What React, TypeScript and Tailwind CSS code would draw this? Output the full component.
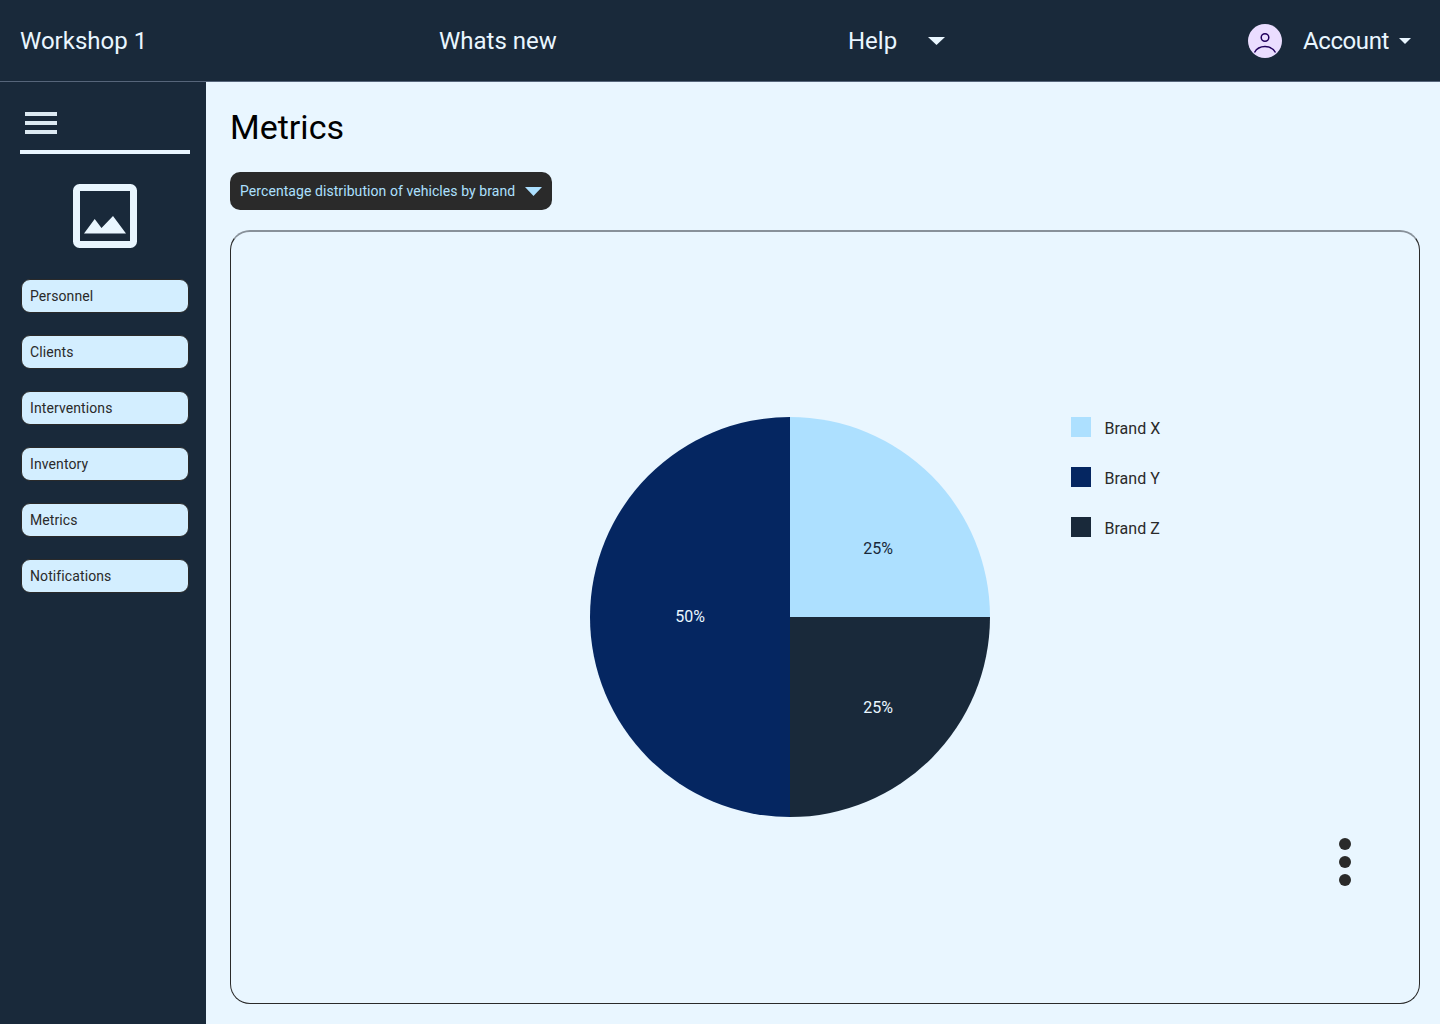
import React from 'react';

const navItems = ['Personnel', 'Clients', 'Interventions', 'Inventory', 'Metrics', 'Notifications'];

const legend = [
  { label: 'Brand X', swatch: 'bg-[#ade0ff]' },
  { label: 'Brand Y', swatch: 'bg-[#052661]' },
  { label: 'Brand Z', swatch: 'bg-[#19293a]' },
];

function Caret({ className }: { className: string }) {
  return (
    <svg className={className} viewBox="0 0 16 8" preserveAspectRatio="none">
      <path d="M0 0h16L8 8z" fill="currentColor" />
    </svg>
  );
}

function PieChart() {
  return (
    <svg width="400" height="400" viewBox="0 0 400 400" className="shrink-0">
      <path d="M200 200V0A200 200 0 0 1 400 200Z" fill="#ade0ff" />
      <path d="M200 200H400A200 200 0 0 1 200 400Z" fill="#19293a" />
      <path d="M200 200V400A200 200 0 0 1 200 0Z" fill="#052661" />
      <text x="288" y="137" textAnchor="middle" fontSize="16" fill="#19293a">25%</text>
      <text x="100" y="205" textAnchor="middle" fontSize="16" fill="#e9f6ff">50%</text>
      <text x="288" y="296" textAnchor="middle" fontSize="16" fill="#e9f6ff">25%</text>
    </svg>
  );
}

export default function App() {
  return (
    <div className="flex h-[1024px] w-[1440px] flex-col overflow-hidden bg-[#e9f6ff] font-['Roboto',sans-serif]">
      {/* Top bar */}
      <header className="flex h-[82px] shrink-0 items-center border-b border-[#56657a] bg-[#19293a] text-2xl text-[#e9f6ff]">
        <div className="w-[439px] pl-[20px]">Workshop 1</div>
        <div className="w-[409px]">Whats new</div>
        <div className="flex w-[400px] items-center">
          <span>Help</span>
          <Caret className="ml-[31px] h-[8px] w-[17px]" />
        </div>
        <div className="flex items-center">
          <div className="flex h-[34px] w-[34px] items-center justify-center rounded-full bg-[#eaddff]">
            <svg width="24" height="24" viewBox="0 0 24 24" fill="none" stroke="#21005d" strokeWidth="1.5">
              <circle cx="12" cy="8.5" r="3.8" />
              <path d="M1.500 23.500C3.500 19.800 7.500 17.600 12 17.600s8.500 2.200 10.500 5.900" />
            </svg>
          </div>
          <span className="ml-[21px] tracking-[-0.4px]">Account</span>
          <Caret className="ml-[10px] h-[6px] w-[12px]" />
        </div>
      </header>

      <div className="flex min-h-0 flex-1">
        {/* Sidebar */}
        <aside className="flex w-[206px] shrink-0 flex-col items-center bg-[#19293a] pl-[20px] pr-[16px]">
          <div className="w-full border-b-[4px] border-[#e9f6ff] pb-[16px] pl-[5px] pt-[30px]">
            <div className="flex w-[32px] flex-col gap-[5px]">
              <div className="h-[4px] bg-[#dce9f2]" />
              <div className="h-[4px] bg-[#dce9f2]" />
              <div className="h-[4px] bg-[#dce9f2]" />
            </div>
          </div>
          <svg className="mt-[30px] shrink-0" width="64" height="64" viewBox="0 0 64 64">
            <rect x="3.500" y="3.500" width="57" height="57" rx="3" fill="none" stroke="#e9f6ff" strokeWidth="7" />
            <path d="M11 49.500 21.700 35 28.500 44 40 32 53 49.500Z" fill="#e9f6ff" />
          </svg>
          <nav className="mt-[31px] flex w-[168px] flex-col gap-[22px]">
            {navItems.map((item) => (
              <div
                key={item}
                className="flex h-[34px] items-center rounded-[9px] border border-[#2a2a2a] bg-[#d3eeff] pl-[8px] text-sm font-normal tracking-[0.1px] text-[#2a2a2a]"
              >
                {item}
              </div>
            ))}
          </nav>
        </aside>

        {/* Main */}
        <main className="flex min-w-0 flex-1 flex-col pl-[24px] pr-[20px]">
          <h1 className="mt-[23px] text-[34px] leading-[44px] font-normal text-black">Metrics</h1>
          <div className="mt-[23px] flex h-[38px] w-[322px] items-center rounded-[10px] bg-[#2a2a2a] pl-[10px] text-sm tracking-[0.07px] text-[#ade0ff]">
            <span>Percentage distribution of vehicles by brand</span>
            <Caret className="ml-[10px] h-[9px] w-[17px]" />
          </div>
          <section className="mt-[20px] flex h-[774px] items-start rounded-[20px] border border-t-2 border-[#2a2a2a] border-t-[#88919a] pl-[359px] pt-[185px]">
            <PieChart />
            <div className="ml-[81px] flex flex-col gap-[30px]">
              {legend.map((entry) => (
                <div key={entry.label} className="flex h-[20px] items-center">
                  <div className={`h-[20px] w-[20px] ${entry.swatch}`} />
                  <span className="ml-[13.5px] mt-[4px] text-base tracking-[0.02px] text-[#2a2a2a]">{entry.label}</span>
                </div>
              ))}
            </div>
            <div className="ml-[178.5px] mt-[421px] flex flex-col gap-[6px]">
              <div className="h-[12px] w-[12px] rounded-full bg-[#2a2a2a]" />
              <div className="h-[12px] w-[12px] rounded-full bg-[#2a2a2a]" />
              <div className="h-[12px] w-[12px] rounded-full bg-[#2a2a2a]" />
            </div>
          </section>
        </main>
      </div>
    </div>
  );
}
